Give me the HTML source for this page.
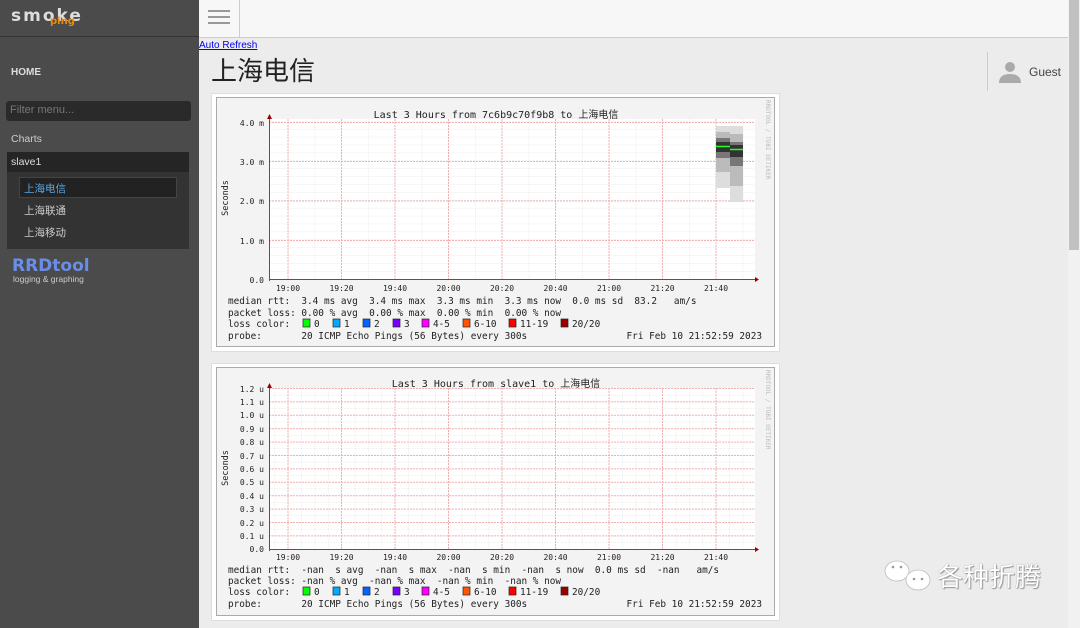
<!DOCTYPE html>
<html><head><meta charset="utf-8">
<style>
*{margin:0;padding:0;box-sizing:border-box}
body{width:1080px;height:628px;overflow:hidden;background:#ececec;font-family:"Liberation Sans","Noto Sans CJK SC",sans-serif;position:relative}
#side{position:absolute;left:0;top:0;width:199px;height:628px;background:#4b4b4b}
#logo{height:37px;border-bottom:1px solid #333;position:relative}
#top{position:absolute;left:199px;top:0;width:869px;height:38px;background:#f7f7f7;border-bottom:1px solid #ccc}
#ham{position:absolute;left:0;top:0;width:41px;height:37px;border-right:1px solid #ccc}
#ham i{position:absolute;left:9px;width:22px;height:2px;background:#999}
.abs{position:absolute}
#scroll{position:absolute;left:1068px;top:0;width:12px;height:628px;background:#f1f1f1}
#scroll div{position:absolute;left:1px;top:0;width:10px;height:250px;background:#c1c1c1}
svg text{white-space:pre}
</style></head><body>
<div id="side">
 <div id="logo">
  <span class="abs" style="left:11px;top:6px;font:bold 17px 'DejaVu Sans',sans-serif;color:#ddd;letter-spacing:2px">smoke</span>
  <span class="abs" style="left:50px;top:16px;font:bold 10px 'DejaVu Sans',sans-serif;color:#f08a00">ping</span>
 </div>
 <div class="abs" style="left:11px;top:67px;font-size:10px;font-weight:bold;color:#ddd">HOME</div>
 <div class="abs" style="left:6px;top:101px;width:185px;height:20px;background:#2a2a2a;border-radius:3px;font-size:11px;color:#777;padding:3px 4px">Filter menu...</div>
 <div class="abs" style="left:11px;top:133px;font-size:10.5px;color:#ccc">Charts</div>
 <div class="abs" style="left:7px;top:152px;width:182px;height:97px;background:#333"></div>
 <div class="abs" style="left:7px;top:152px;width:182px;height:20px;background:#252525;font-size:10.5px;color:#ddd;padding:4px 4px">slave1</div>
 <div class="abs" style="left:19px;top:177px;width:158px;height:21px;background:#222;border:1px solid #444;font-size:10.5px;color:#5aa8e0;padding:3px 4px">上海电信</div>
 <div class="abs" style="left:24px;top:203px;font-size:10.5px;color:#ccc">上海联通</div>
 <div class="abs" style="left:24px;top:225px;font-size:10.5px;color:#ccc">上海移动</div>
 <div class="abs" style="left:12px;top:256px;font:bold 17px 'DejaVu Sans',sans-serif;color:#6a8ee8">RRDtool</div>
 <div class="abs" style="left:13px;top:274px;font-size:8.5px;color:#ccc">logging &amp; graphing</div>
</div>
<div id="top"><div id="ham"><i style="top:10px"></i><i style="top:16px"></i><i style="top:22px"></i></div></div>
<a class="abs" style="left:199px;top:40px;font-size:10px;color:#00e;text-decoration:underline">Auto Refresh</a>
<div class="abs" style="left:211px;top:51px;font-size:26px;color:#222">上海电信</div>
<div class="abs" style="left:987px;top:52px;width:1px;height:39px;background:#ccc"></div>
<svg class="abs" style="left:998px;top:60px" width="24" height="24"><circle cx="12" cy="7" r="5" fill="#aaa"/><path d="M1 23 Q1 14 12 14 Q23 14 23 23 Z" fill="#aaa"/></svg>
<div class="abs" style="left:1029px;top:65px;font-size:12px;color:#444">Guest</div>

<svg class="abs" style="left:0;top:0" width="1080" height="628" font-family="'DejaVu Sans Mono','Liberation Mono',monospace" font-size="9.4" fill="#222">
<defs>
 <pattern id="g1" patternUnits="userSpaceOnUse" x="288" y="279" width="26.75" height="7.9"><path d="M0 0V7.9M0 0H26.75" stroke="#ddd" stroke-width="1" stroke-dasharray="1,1" fill="none"/></pattern>
 <pattern id="g2" patternUnits="userSpaceOnUse" x="288" y="549" width="13.375" height="6.7"><path d="M0 0V6.7M0 0H13.375" stroke="#ddd" stroke-width="1" stroke-dasharray="1,1" fill="none"/></pattern>
</defs>
<!-- graph 1 -->
<rect x="211.5" y="93.5" width="568" height="258" fill="#fff" stroke="#ddd"/>
<rect x="216.5" y="97.5" width="558" height="249" fill="#f3f3f3" stroke="#aaa"/>
<rect x="269" y="119" width="486" height="160" fill="#fff"/>
<rect x="269" y="119" width="486" height="160" fill="url(#g1)"/>
<g stroke="#f3b0b0" stroke-dasharray="2,1">
<path d="M269 122.5H755M269 161.5H755M269 201H755M269 240.5H755"/>
<path d="M288 119V279M341.5 119V279M395 119V279M448.5 119V279M502 119V279M555.5 119V279M609 119V279M662.5 119V279M716 119V279"/>
</g>
<g>
<rect x="716" y="126" width="14" height="62" fill="#ddd"/><rect x="716" y="132" width="14" height="40" fill="#bbb"/><rect x="716" y="138" width="14" height="20" fill="#777"/><rect x="716" y="142" width="14" height="10" fill="#333"/>
<rect x="730" y="126" width="13" height="76" fill="#ddd"/><rect x="730" y="134" width="13" height="52" fill="#bbb"/><rect x="730" y="142" width="13" height="24" fill="#777"/><rect x="730" y="145" width="13" height="12" fill="#333"/>
<path d="M716 146.5H730M730 149.5H743" stroke="#2f2" stroke-width="1.4"/>
</g>
<path d="M269 279.5H755M269.5 117V281" stroke="#555"/>
<path d="M755 277L759 279.5L755 282ZM267 119L269.5 114L272 119Z" fill="#900"/>
<text x="496" y="118" text-anchor="middle" font-size="10">Last 3 Hours from 7c6b9c70f9b8 to 上海电信</text>
<g font-size="8" text-anchor="end"><text x="264" y="126">4.0 m</text><text x="264" y="165">3.0 m</text><text x="264" y="204">2.0 m</text><text x="264" y="244">1.0 m</text><text x="264" y="283">0.0</text></g>
<text transform="translate(228,198) rotate(-90)" text-anchor="middle" font-size="8.5">Seconds</text>
<text transform="translate(766,100) rotate(90)" font-size="6" fill="#bbb">RRDTOOL / TOBI OETIKER</text>
<g font-size="8" text-anchor="middle"><text x="288" y="291">19:00</text><text x="341.5" y="291">19:20</text><text x="395" y="291">19:40</text><text x="448.5" y="291">20:00</text><text x="502" y="291">20:20</text><text x="555.5" y="291">20:40</text><text x="609" y="291">21:00</text><text x="662.5" y="291">21:20</text><text x="716" y="291">21:40</text></g>
<g><text x="228" y="304">median rtt:  3.4 ms avg  3.4 ms max  3.3 ms min  3.3 ms now  0.0 ms sd  83.2   am/s</text>
<text x="228" y="316">packet loss: 0.00 % avg  0.00 % max  0.00 % min  0.00 % now</text>
<text x="228" y="327">loss color:</text><text x="314" y="327">0</text><text x="344" y="327">1</text><text x="374" y="327">2</text><text x="404" y="327">3</text><text x="433" y="327">4-5</text><text x="474" y="327">6-10</text><text x="520" y="327">11-19</text><text x="572" y="327">20/20</text>
<text x="228" y="339">probe:       20 ICMP Echo Pings (56 Bytes) every 300s</text>
<text x="762" y="339" text-anchor="end">Fri Feb 10 21:52:59 2023</text></g>
<g stroke="#222" stroke-width=".7"><rect x="303" y="319" width="7" height="8" fill="#0f0"/><rect x="333" y="319" width="7" height="8" fill="#0af"/><rect x="363" y="319" width="7" height="8" fill="#06f"/><rect x="393" y="319" width="7" height="8" fill="#70f"/><rect x="422" y="319" width="7" height="8" fill="#f0f"/><rect x="463" y="319" width="7" height="8" fill="#f50"/><rect x="509" y="319" width="7" height="8" fill="#f00"/><rect x="561" y="319" width="7" height="8" fill="#900"/></g>

<!-- graph 2 -->
<rect x="211.5" y="363.5" width="568" height="257" fill="#fff" stroke="#ddd"/>
<rect x="216.5" y="367.5" width="558" height="248" fill="#f3f3f3" stroke="#aaa"/>
<rect x="269" y="388" width="486" height="161" fill="#fff"/>
<rect x="269" y="388" width="486" height="161" fill="url(#g2)"/>
<g stroke="#f3b0b0" stroke-dasharray="2,1">
<path d="M269 388.5H755M269 401.9H755M269 415.3H755M269 428.7H755M269 442.1H755M269 455.5H755M269 468.9H755M269 482.3H755M269 495.7H755M269 509.1H755M269 522.5H755M269 535.9H755"/>
<path d="M288 388V549M341.5 388V549M395 388V549M448.5 388V549M502 388V549M555.5 388V549M609 388V549M662.5 388V549M716 388V549"/>
</g>
<path d="M269 549.5H755M269.5 386V551" stroke="#555"/>
<path d="M755 547L759 549.5L755 552ZM267 388L269.5 383L272 388Z" fill="#900"/>
<text x="496" y="387" text-anchor="middle" font-size="10">Last 3 Hours from slave1 to 上海电信</text>
<g font-size="8" text-anchor="end"><text x="264" y="392">1.2 u</text><text x="264" y="405">1.1 u</text><text x="264" y="418">1.0 u</text><text x="264" y="432">0.9 u</text><text x="264" y="445">0.8 u</text><text x="264" y="459">0.7 u</text><text x="264" y="472">0.6 u</text><text x="264" y="485">0.5 u</text><text x="264" y="499">0.4 u</text><text x="264" y="512">0.3 u</text><text x="264" y="526">0.2 u</text><text x="264" y="539">0.1 u</text><text x="264" y="552">0.0</text></g>
<text transform="translate(228,468) rotate(-90)" text-anchor="middle" font-size="8.5">Seconds</text>
<text transform="translate(766,370) rotate(90)" font-size="6" fill="#bbb">RRDTOOL / TOBI OETIKER</text>
<g font-size="8" text-anchor="middle"><text x="288" y="560">19:00</text><text x="341.5" y="560">19:20</text><text x="395" y="560">19:40</text><text x="448.5" y="560">20:00</text><text x="502" y="560">20:20</text><text x="555.5" y="560">20:40</text><text x="609" y="560">21:00</text><text x="662.5" y="560">21:20</text><text x="716" y="560">21:40</text></g>
<g><text x="228" y="573">median rtt:  -nan  s avg  -nan  s max  -nan  s min  -nan  s now  0.0 ms sd  -nan   am/s</text>
<text x="228" y="584">packet loss: -nan % avg  -nan % max  -nan % min  -nan % now</text>
<text x="228" y="595">loss color:</text><text x="314" y="595">0</text><text x="344" y="595">1</text><text x="374" y="595">2</text><text x="404" y="595">3</text><text x="433" y="595">4-5</text><text x="474" y="595">6-10</text><text x="520" y="595">11-19</text><text x="572" y="595">20/20</text>
<text x="228" y="607">probe:       20 ICMP Echo Pings (56 Bytes) every 300s</text>
<text x="762" y="607" text-anchor="end">Fri Feb 10 21:52:59 2023</text></g>
<g stroke="#222" stroke-width=".7"><rect x="303" y="587" width="7" height="8" fill="#0f0"/><rect x="333" y="587" width="7" height="8" fill="#0af"/><rect x="363" y="587" width="7" height="8" fill="#06f"/><rect x="393" y="587" width="7" height="8" fill="#70f"/><rect x="422" y="587" width="7" height="8" fill="#f0f"/><rect x="463" y="587" width="7" height="8" fill="#f50"/><rect x="509" y="587" width="7" height="8" fill="#f00"/><rect x="561" y="587" width="7" height="8" fill="#900"/></g>

<!-- watermark -->
<g fill="#fff" stroke="#bbb" stroke-width=".8">
<ellipse cx="897" cy="571" rx="12" ry="10"/><ellipse cx="918" cy="580" rx="12" ry="10"/>
</g>
<g fill="#999"><circle cx="893" cy="567" r="1.3"/><circle cx="901" cy="567" r="1.3"/><circle cx="914" cy="579" r="1.3"/><circle cx="922" cy="579" r="1.3"/></g>
</svg>
<div class="abs" style="left:937px;top:562px;font-size:26px;line-height:30px;color:#fff;text-shadow:0 0 1px #777,1px 1px 1px #999">各种折腾</div>
<div id="scroll"><div></div></div>
</body></html>
